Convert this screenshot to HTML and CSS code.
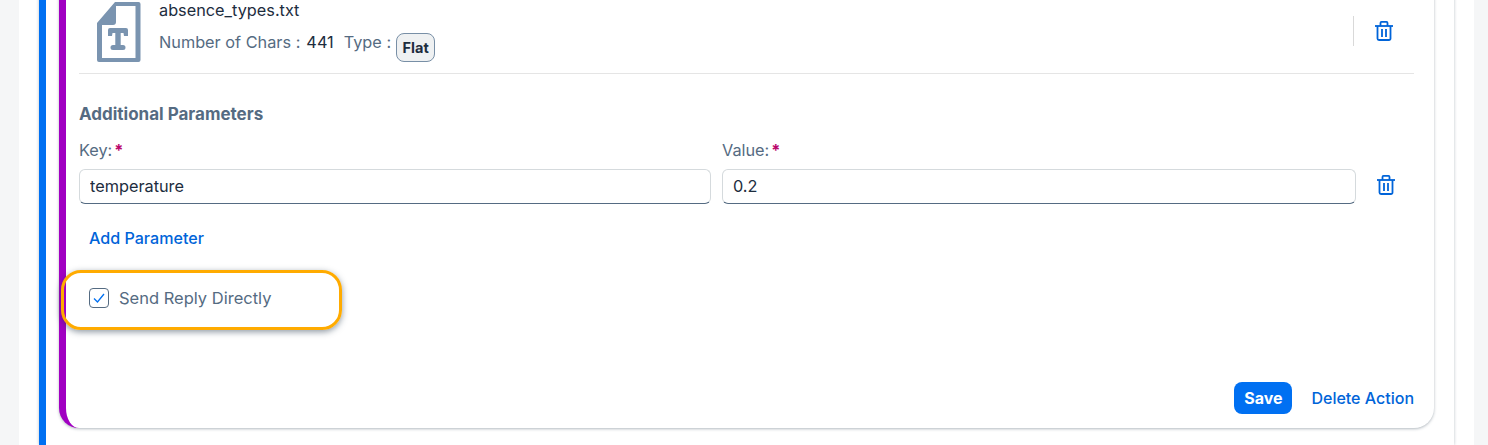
FILE: index.html
```html
<!DOCTYPE html>
<html lang="en">
<head>
    <meta charset="UTF-8">
    <title>Action</title>
    <link rel="stylesheet" href="styles.css">
</head>
<body>
    <div class="page">
        <div class="outer-card">
            <div class="action-card">
                <div class="file-row">
                    <svg class="file-icon" width="46" height="62" viewBox="0 0 46 62">
                        <path fill="#7a94b0" fill-rule="evenodd" d="M19 1H42.500a2 2 0 0 1 2 2V59a2 2 0 0 1-2 2H3a2 2 0 0 1-2-2V22ZM20 5V21a3 3 0 0 1-3 3H6V57H39.500V5Z"/>
                        <path fill="#7a94b0" d="M12 29a2 2 0 0 1 2-2H30a2 2 0 0 1 2 2V35H28L27.500 32H24.700V44H27a2.500 2.500 0 0 1 0 5H17a2.500 2.500 0 0 1 0-5H19.300V32H16.500L16 35H12Z"/>
                    </svg>
                    <div class="file-info">
                        <div class="file-name">absence_types.txt</div>
                        <div class="file-meta">
                            <span class="meta-label">Number of Chars :</span>
                            <span class="meta-value">441</span>
                            <span class="meta-label type-label">Type :</span>
                            <span class="tag">Flat</span>
                        </div>
                    </div>
                    <div class="file-actions">
                        <button class="icon-btn">
                            <svg width="18" height="20" viewBox="0 0 18 20"><use href="#trash"/></svg>
                        </button>
                    </div>
                </div>

                <h3 class="section-title">Additional Parameters</h3>

                <div class="param-row">
                    <div class="field">
                        <label class="field-label">Key:<span class="required">*</span></label>
                        <input class="text-input" type="text" value="temperature">
                    </div>
                    <div class="field">
                        <label class="field-label">Value:<span class="required">*</span></label>
                        <input class="text-input" type="text" value="0.2">
                    </div>
                    <button class="icon-btn param-delete">
                        <svg width="18" height="20" viewBox="0 0 18 20"><use href="#trash"/></svg>
                    </button>
                </div>

                <a class="link add-param">Add Parameter</a>

                <div class="reply-row">
                    <span class="highlight"></span>
                    <span class="checkbox">
                        <svg width="12" height="10" viewBox="0 0 12 10"><path d="M1 5.500 4.500 9 11 1" fill="none" stroke="#0070f2" stroke-width="1.300"/></svg>
                    </span>
                    <span class="reply-label">Send Reply Directly</span>
                </div>

                <div class="card-footer">
                    <button class="save-btn">Save</button>
                    <a class="link">Delete Action</a>
                </div>
            </div>
        </div>
    </div>

    <svg class="icon-defs" width="0" height="0">
        <g id="trash" fill="none" stroke="#0064d9" stroke-width="1.800">
            <path d="M0 5H18"/>
            <path d="M5.500 5V1.900a1 1 0 0 1 1-1H11.500a1 1 0 0 1 1 1V5"/>
            <path d="M2.500 5V17.500a1.500 1.500 0 0 0 1.500 1.500H14a1.500 1.500 0 0 0 1.500-1.500V5"/>
            <path d="M7 8V16M11 8V16"/>
        </g>
    </svg>
</body>
</html>
```

FILE: styles.css
```css
html, body {
    margin: 0;
    height: 445px;
    overflow: hidden;
}

body {
    background: #f5f6f7;
    color: #1d2d3e;
    font-family: 'Inter', sans-serif;
    font-size: 16.3px;
}

.page {
    margin: -20px 14px 0 19px;
    padding: 0 20px;
    background: #fff;
    height: 465px;
}

.outer-card {
    border-left: 7px solid #0070f2;
    height: 465px;
    padding: 0 20px 0 13px;
    box-shadow: 0 0 3px rgba(34, 54, 73, 0.3);
    background: #fff;
}

.action-card {
    box-sizing: border-box;
    height: 448px;
    border-left: 7px solid #a100c2;
    border-radius: 0 0 20px 20px;
    padding: 0 20px 14px 13px;
    background: #fff;
    box-shadow: 0 1px 3px rgba(34, 54, 73, 0.35);
}

.file-row {
    display: flex;
    align-items: flex-end;
    height: 94px;
    box-sizing: border-box;
    padding: 0 0 10px 17px;
    border-bottom: 1px solid #e5e5e5;
}

.file-icon {
    flex: none;
    margin-right: 17px;
}

.file-info {
    flex: 1;
    margin-bottom: 6px;
}

.file-name {
    line-height: 20px;
    margin-bottom: 7px;
}

.file-meta {
    display: flex;
    align-items: center;
    height: 30px;
}

.meta-label {
    color: #556b82;
}

.meta-value {
    margin-left: 6px;
}

.type-label {
    margin-left: 10px;
}

.tag {
    margin: 10px 0 0 5px;
    padding: 0 5.5px;
    height: 29px;
    line-height: 27px;
    box-sizing: border-box;
    border: 1px solid #788fa6;
    border-radius: 8px;
    background: #eff1f2;
    font-size: 14.5px;
    font-weight: 700;
}

.file-actions {
    align-self: flex-start;
    width: 61px;
    height: 30px;
    margin-top: 36px;
    border-left: 1px solid #d9d9d9;
    display: flex;
    align-items: center;
    padding-left: 21px;
    box-sizing: border-box;
}

.icon-btn {
    border: 0;
    padding: 0;
    background: none;
    line-height: 0;
}

.section-title {
    margin: 30px 0 0;
    line-height: 20px;
    font-size: 17px;
    font-weight: 700;
    color: #556b82;
}

.param-row {
    display: grid;
    grid-template-columns: 632fr 634fr 47px;
    align-items: end;
    gap: 11px;
    margin-top: 16px;
}

.field-label {
    display: block;
    line-height: 20px;
    margin-bottom: 9px;
    color: #556b82;
}

.required {
    color: #ba066c;
    font-weight: 700;
    margin-left: 2px;
}

.text-input {
    display: block;
    box-sizing: border-box;
    width: 100%;
    height: 35px;
    padding: 0 10px 2px;
    border: 1px solid #d5dadd;
    border-bottom-color: #556b82;
    border-radius: 6px;
    font: inherit;
    color: #1d2d3e;
    outline: 0;
}

.param-delete {
    height: 35px;
    padding: 0 0 4px 10px;
    text-align: left;
}

.link {
    color: #0064d9;
    font-size: 16px;
    font-weight: 500;
}

.add-param {
    display: block;
    margin: 24px 0 0 10px;
    line-height: 20px;
    font-size: 16.1px;
}

.reply-row {
    position: relative;
    display: flex;
    align-items: center;
    gap: 10px;
    margin: 40px 0 0 10px;
    height: 20px;
    color: #556b82;
}

.reply-label {
    font-size: 16.5px;
    margin-top: -1px;
}

.checkbox {
    box-sizing: border-box;
    width: 20px;
    height: 20px;
    display: flex;
    align-items: center;
    justify-content: center;
    border: 1px solid #556b82;
    border-radius: 4px;
}

.highlight {
    position: absolute;
    left: -28px;
    top: -18px;
    width: 281px;
    height: 60px;
    box-sizing: border-box;
    border: 3px solid #ffab00;
    border-radius: 20px;
    box-shadow: 0 2px 6px rgba(34, 54, 73, 0.5);
}

.card-footer {
    display: flex;
    justify-content: flex-end;
    align-items: center;
    gap: 19px;
    margin-top: 74px;
}

.save-btn {
    box-sizing: border-box;
    width: 58px;
    height: 32px;
    border: 0;
    border-radius: 8px;
    background: #0070f2;
    color: #fff;
    font: inherit;
    font-size: 16px;
    font-weight: 700;
}

.icon-defs {
    position: absolute;
}
```
